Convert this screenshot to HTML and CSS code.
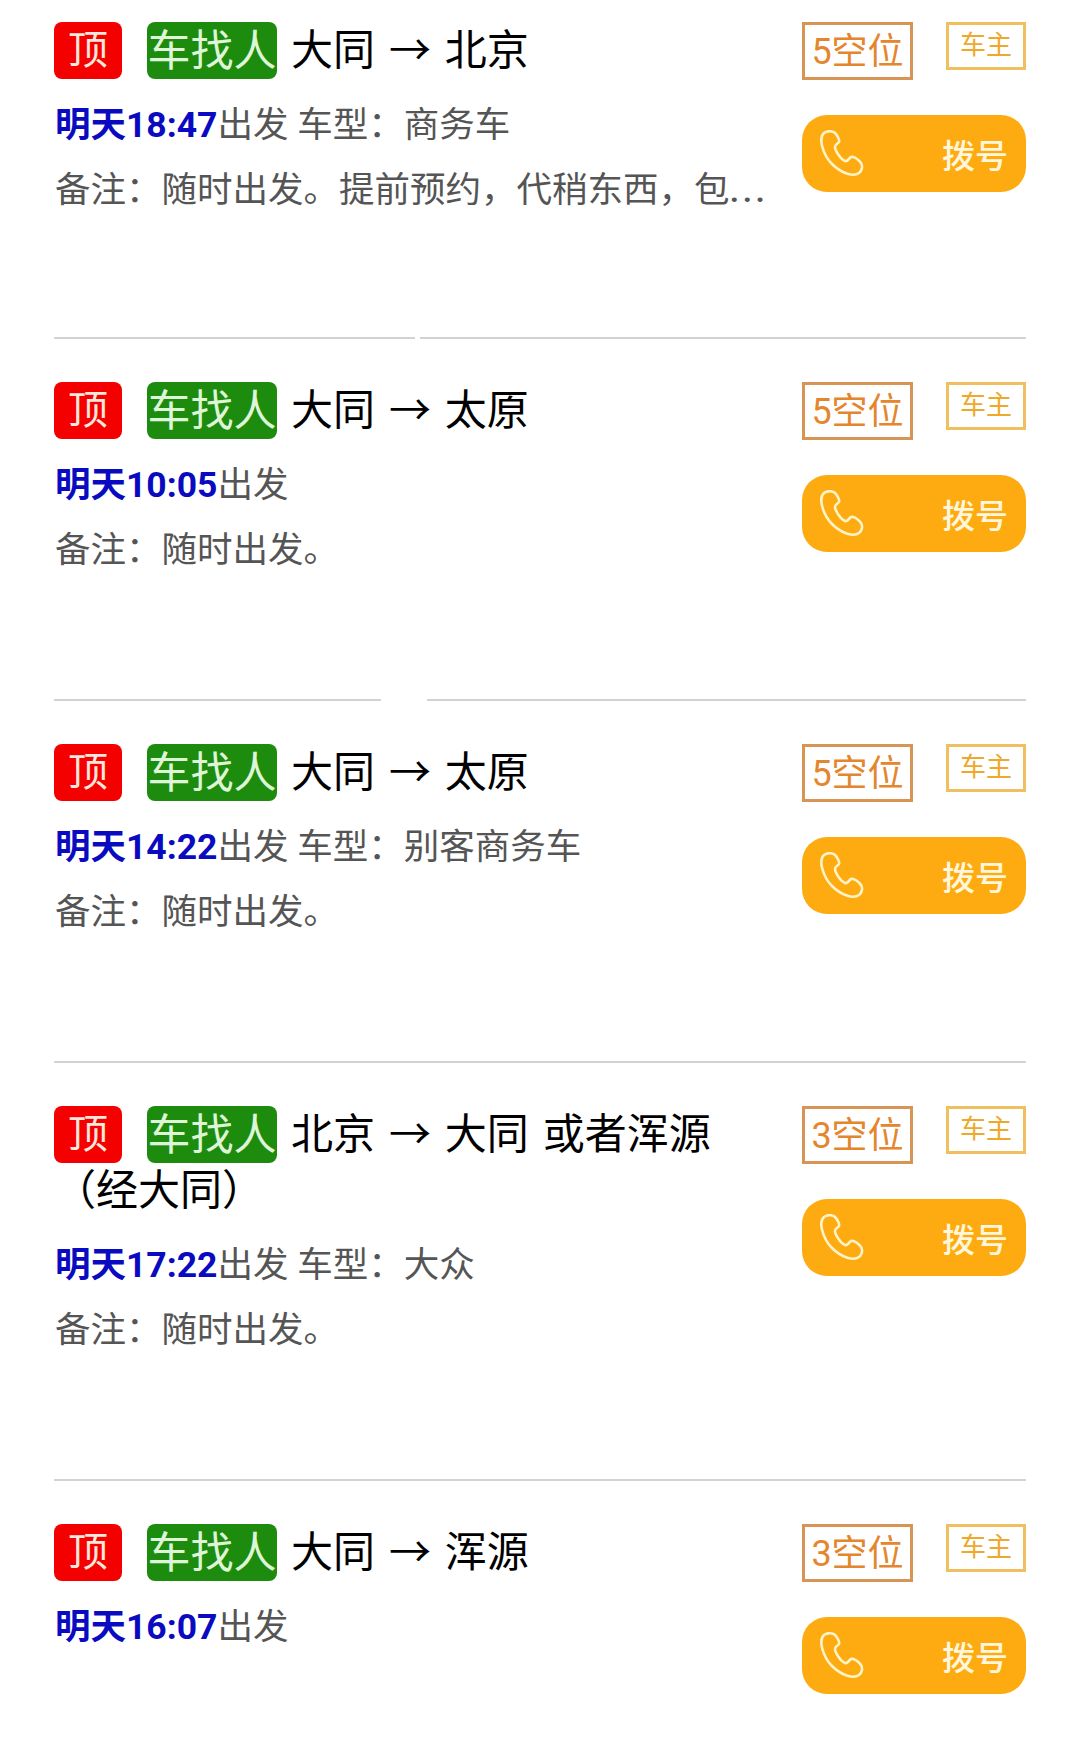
FILE: index.html
```html
<!DOCTYPE html>
<html lang="zh-CN">
<head>
<meta charset="utf-8">
<title>车找人</title>
<link rel="stylesheet" href="styles.css">
</head>
<body>
<svg class="sprite" width="0" height="0" aria-hidden="true">
  <symbol id="phone" viewBox="0 0 44 47">
    <path d="M4 3C8 0 14 1 16 4C18 7 20 10 19 12C18 14 15 14 15 17C15 20 20 29 25 31C28 32 29 28 31 27C34 26 39 30 41 33C43 36 42 41 39 43C34 47 22 44 12 34C3 25-2 8 4 3Z"/>
  </symbol>
</svg>
<main class="list">
  <article class="card card-first">
    <div class="left">
      <h2 class="title"><span class="tag tag-top">顶</span><span class="tag tag-kind">车找人</span>大同 → 北京</h2>
      <p class="line"><b class="time">明天18:47</b>出发 车型：商务车</p>
      <p class="line">备注：随时出发。提前预约，代稍东西，包<span class="dots">...</span></p>
    </div>
    <div class="right">
      <div class="labels"><span class="seats">5空位</span><span class="owner">车主</span></div>
      <a class="dial"><svg class="phone"><use href="#phone"/></svg><span>拨号</span></a>
    </div>
  </article>
  <div class="divider"><i class="seg seg-a"></i><i class="seg"></i></div>

  <article class="card">
    <div class="left">
      <h2 class="title"><span class="tag tag-top">顶</span><span class="tag tag-kind">车找人</span>大同 → 太原</h2>
      <p class="line"><b class="time">明天10:05</b>出发</p>
      <p class="line">备注：随时出发。</p>
    </div>
    <div class="right">
      <div class="labels"><span class="seats">5空位</span><span class="owner">车主</span></div>
      <a class="dial"><svg class="phone"><use href="#phone"/></svg><span>拨号</span></a>
    </div>
  </article>
  <div class="divider divider-wide-gap"><i class="seg seg-b"></i><i class="seg"></i></div>

  <article class="card">
    <div class="left">
      <h2 class="title"><span class="tag tag-top">顶</span><span class="tag tag-kind">车找人</span>大同 → 太原</h2>
      <p class="line"><b class="time">明天14:22</b>出发 车型：别客商务车</p>
      <p class="line">备注：随时出发。</p>
    </div>
    <div class="right">
      <div class="labels"><span class="seats">5空位</span><span class="owner">车主</span></div>
      <a class="dial"><svg class="phone"><use href="#phone"/></svg><span>拨号</span></a>
    </div>
  </article>
  <div class="divider"><i class="seg"></i></div>

  <article class="card">
    <div class="left">
      <h2 class="title"><span class="tag tag-top">顶</span><span class="tag tag-kind">车找人</span>北京 → 大同 或者浑源（经大同）</h2>
      <p class="line"><b class="time">明天17:22</b>出发 车型：大众</p>
      <p class="line">备注：随时出发。</p>
    </div>
    <div class="right">
      <div class="labels"><span class="seats">3空位</span><span class="owner">车主</span></div>
      <a class="dial"><svg class="phone"><use href="#phone"/></svg><span>拨号</span></a>
    </div>
  </article>
  <div class="divider"><i class="seg"></i></div>

  <article class="card card-last">
    <div class="left">
      <h2 class="title"><span class="tag tag-top">顶</span><span class="tag tag-kind">车找人</span>大同 → 浑源</h2>
      <p class="line"><b class="time">明天16:07</b>出发</p>
    </div>
    <div class="right">
      <div class="labels"><span class="seats">3空位</span><span class="owner">车主</span></div>
      <a class="dial"><svg class="phone"><use href="#phone"/></svg><span>拨号</span></a>
    </div>
  </article>
</main>
</body>
</html>
```
FILE: styles.css
```css
* { box-sizing: border-box; }

html, body {
  margin: 0;
  background: #fff;
}

body {
  font-family: Roboto, "Noto Sans CJK SC", sans-serif;
}

.sprite { position: absolute; }

.list {
  padding: 0 54px;
}

.card {
  display: flex;
  justify-content: space-between;
  padding: 43px 0 116px;
}

.card-first { padding-top: 22px; padding-bottom: 114px; }
.card-last { padding-bottom: 0; }

.left {
  width: 714px;
  min-width: 0;
}

.title {
  margin: 0 0 14px;
  padding-top: 1px;
  font-size: 42px;
  font-weight: 400;
  line-height: 56px;
  word-spacing: 3.5px;
  color: #000;
}

.tag {
  display: inline-block;
  height: 57px;
  margin-top: -1px;
  line-height: 58px;
  border-radius: 8px;
  vertical-align: top;
  text-align: center;
  word-spacing: 0;
}

.tag-top {
  width: 68px;
  margin-right: 25px;
  background: #f50000;
  color: #fde6dc;
  font-size: 40px;
}

.tag-kind {
  width: 130px;
  margin-right: 14px;
  background: #1d8c0e;
  color: #dff5d8;
  font-size: 43px;
}

.line {
  margin: 0;
  padding-left: 1px;
  font-size: 35.5px;
  line-height: 65px;
  color: #555;
  white-space: nowrap;
}

.dots {
  letter-spacing: 3px;
  font-weight: 500;
}

.time {
  font-weight: 700;
  color: #0a0ac0;
}

.right {
  width: 224px;
  flex: none;
}

.labels {
  display: flex;
  justify-content: space-between;
  align-items: flex-start;
}

.seats {
  width: 111px;
  height: 58px;
  border: 3px solid #d89455;
  color: #e4862e;
  font-size: 36px;
  line-height: 54px;
  text-align: center;
}

.owner {
  width: 80px;
  height: 48px;
  border: 3px solid #f0c060;
  color: #eea92c;
  font-size: 26px;
  line-height: 40px;
  text-align: center;
}

.dial {
  display: flex;
  align-items: center;
  justify-content: space-between;
  height: 77px;
  margin-top: 35px;
  padding: 0 18px;
  border-radius: 25px;
  background: #fdab10;
  color: #fff6dc;
  font-size: 33px;
  font-weight: 500;
}

.phone {
  width: 44px;
  height: 47px;
  fill: none;
  stroke: #fff3c8;
  stroke-width: 2.6;
}

.divider {
  display: flex;
  gap: 5px;
}

.divider-wide-gap { gap: 46px; }

.seg {
  flex: 1;
  height: 2px;
  background: #d2d2d2;
}

.seg-a { flex: 0 0 361px; }
.seg-b { flex: 0 0 327px; }
```
